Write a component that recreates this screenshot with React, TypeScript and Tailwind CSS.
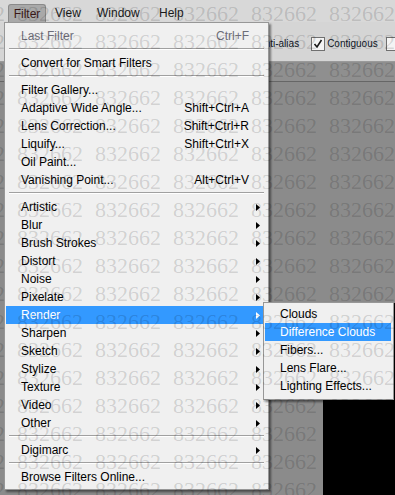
import type { ReactNode } from 'react';

type MenuItem =
  | { kind: 'sep' }
  | {
      kind: 'item';
      label: string;
      shortcut?: string;
      submenu?: boolean;
      disabled?: boolean;
      active?: boolean;
    };

const sep: MenuItem = { kind: 'sep' };

function item(
  label: string,
  extra: Partial<Omit<Extract<MenuItem, { kind: 'item' }>, 'kind' | 'label'>> = {},
): MenuItem {
  return { kind: 'item', label, ...extra };
}

const filterItems: MenuItem[] = [
  item('Last Filter', { shortcut: 'Ctrl+F', disabled: true }),
  sep,
  item('Convert for Smart Filters'),
  sep,
  item('Filter Gallery...'),
  item('Adaptive Wide Angle...', { shortcut: 'Shift+Ctrl+A' }),
  item('Lens Correction...', { shortcut: 'Shift+Ctrl+R' }),
  item('Liquify...', { shortcut: 'Shift+Ctrl+X' }),
  item('Oil Paint...'),
  item('Vanishing Point...', { shortcut: 'Alt+Ctrl+V' }),
  sep,
  item('Artistic', { submenu: true }),
  item('Blur', { submenu: true }),
  item('Brush Strokes', { submenu: true }),
  item('Distort', { submenu: true }),
  item('Noise', { submenu: true }),
  item('Pixelate', { submenu: true }),
  item('Render', { submenu: true, active: true }),
  item('Sharpen', { submenu: true }),
  item('Sketch', { submenu: true }),
  item('Stylize', { submenu: true }),
  item('Texture', { submenu: true }),
  item('Video', { submenu: true }),
  item('Other', { submenu: true }),
  sep,
  item('Digimarc', { submenu: true }),
  sep,
  item('Browse Filters Online...'),
];

const renderItems: MenuItem[] = [
  item('Clouds'),
  item('Difference Clouds', { active: true }),
  item('Fibers...'),
  item('Lens Flare...'),
  item('Lighting Effects...'),
];

function Arrow({ light }: { light?: boolean }) {
  return (
    <svg width="4" height="7" viewBox="0 0 4 7" className="ml-auto">
      <path d="M0 0 L4 3.5 L0 7 Z" fill={light ? '#ffffff' : '#000000'} />
    </svg>
  );
}

function MenuRows({ items }: { items: MenuItem[] }) {
  return (
    <>
      {items.map((entry, index) => {
        if (entry.kind === 'sep') {
          return (
            <div key={`sep-${index}`} className="h-[9px] px-[3px] pt-[3px]">
              <div className="h-px bg-[#a0a0a0]" />
              <div className="h-px bg-white" />
            </div>
          );
        }

        const textColor = entry.active
          ? 'text-white'
          : entry.disabled
            ? 'text-[#6d6d78]'
            : 'text-black';

        return (
          <div
            key={entry.label}
            className={`flex h-[18px] items-center pl-[15px] ${
              entry.submenu ? 'pr-[7px]' : 'pr-[18px]'
            } ${entry.active ? 'bg-[#3399ff]' : ''} ${textColor}`}
          >
            <span className="whitespace-nowrap">{entry.label}</span>
            {entry.shortcut && (
              <span className="ml-auto whitespace-nowrap">{entry.shortcut}</span>
            )}
            {entry.submenu && <Arrow light={entry.active} />}
          </div>
        );
      })}
    </>
  );
}

function Checkbox({ checked }: { checked?: boolean }) {
  return (
    <div className="flex h-[14px] w-[14px] shrink-0 items-center justify-center border border-[#707070] bg-[#f4f4f4]">
      {checked && (
        <svg width="10" height="10" viewBox="0 0 10 10">
          <path
            d="M1.5 5 L4 8 L8.5 1"
            fill="none"
            stroke="#1a1a1a"
            strokeWidth="1.6"
          />
        </svg>
      )}
    </div>
  );
}

function Watermark() {
  const rows = Array.from({ length: 18 });
  const cols = Array.from({ length: 7 });
  return (
    <div className="pointer-events-none absolute inset-0 overflow-hidden font-['Liberation_Serif',serif] text-[22px] leading-[28px] text-black/15">
      {rows.map((_, r) => (
        <div key={r} className="-ml-[61px] flex h-[28px]">
          {cols.map((__, c) => (
            <span key={c} className="w-[78px] shrink-0">
              832662
            </span>
          ))}
        </div>
      ))}
    </div>
  );
}

function TopMenu({ children }: { children: ReactNode }) {
  return <span className="shrink-0">{children}</span>;
}

export default function App() {
  return (
    <div className="relative h-[495px] w-[395px] overflow-hidden bg-[#8b8b8b] font-['Liberation_Sans',Arial,sans-serif] text-[12px]">
      {/* application menu bar */}
      <div className="flex h-[22px] items-end bg-[#d8d8d8] text-[#1a1a1a]">
        <div className="ml-[8px] flex h-[18px] w-[38px] items-center justify-center rounded-t-[3px] border border-b-0 border-[#8a8a8a] bg-[#a9a9a9] text-[#3a1818]">
          Filter
        </div>
        <div className="ml-[9px] flex h-[18px] items-center">
          <span className="w-[42px]">View</span>
          <span className="w-[62px]">Window</span>
          <TopMenu>Help</TopMenu>
        </div>
      </div>

      {/* tool options bar */}
      <div className="flex h-[40px] items-center border-b border-[#9a9a9a] bg-[#d5d5d5] pt-[4px] text-[10px] text-[#101828]">
        <div className="ml-[241px] flex items-center">
          <Checkbox checked />
          <span className="ml-[3px] whitespace-nowrap">Anti-alias</span>
          <div className="ml-[12px]">
            <Checkbox checked />
          </div>
          <span className="ml-[2px] whitespace-nowrap">Contiguous</span>
          <div className="ml-[8px]">
            <Checkbox />
          </div>
        </div>
      </div>

      {/* document area */}
      <div className="flex h-[433px] flex-col">
        <div className="h-[20px] border-b border-[#666666] bg-[#8f8f8f]" />
        <div className="flex-1 bg-[#8b8b8b]" />
        <div className="flex h-[192px]">
          <div className="w-[323px] bg-[#8b8b8b]" />
          <div className="flex-1 bg-black" />
        </div>
      </div>

      {/* Filter dropdown */}
      <div className="absolute left-[4px] top-[22px] w-[265px] border border-[#979797] bg-[#f0f0f0] px-px pb-[3px] pt-[4px] shadow-[2px_2px_2px_rgba(0,0,0,0.45)]">
        <MenuRows items={filterItems} />
      </div>

      {/* Render submenu */}
      <div className="absolute left-[263px] top-[302px] w-[131px] border border-[#979797] bg-[#f0f0f0] pb-[4px] pl-px pr-[2px] pt-[2px] shadow-[2px_2px_2px_rgba(0,0,0,0.45)]">
        <MenuRows items={renderItems} />
      </div>

      <Watermark />
    </div>
  );
}
